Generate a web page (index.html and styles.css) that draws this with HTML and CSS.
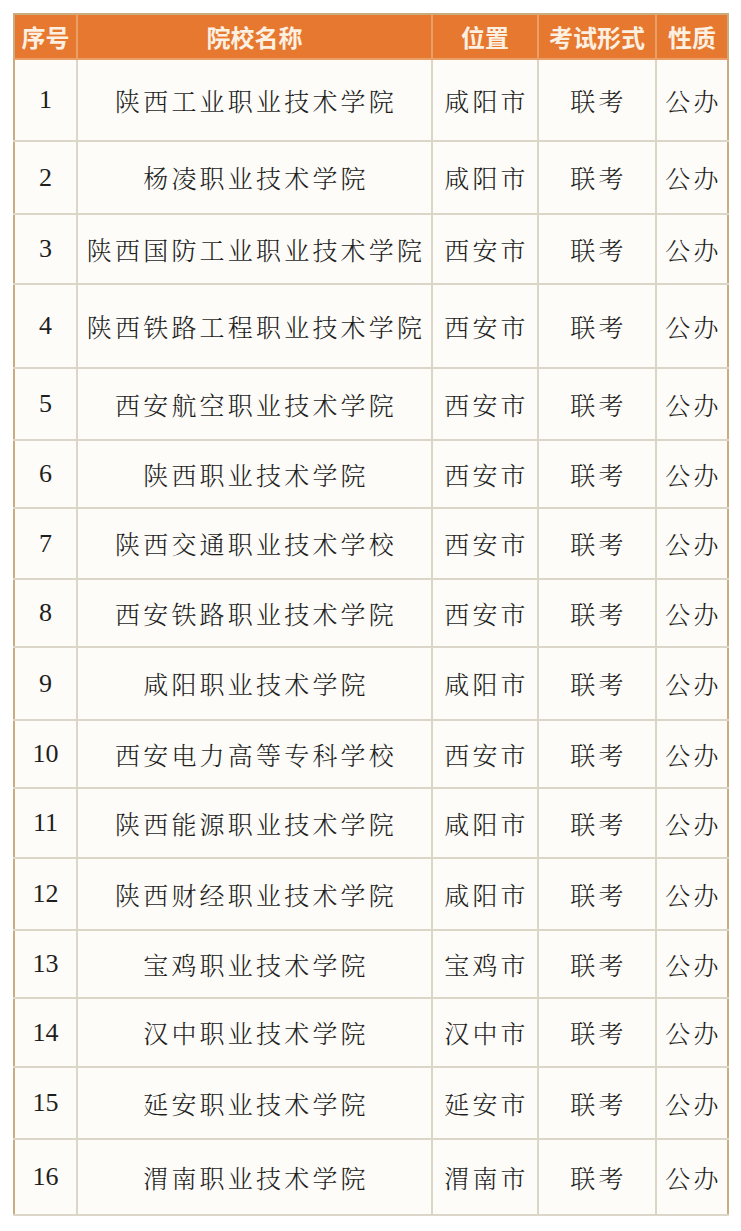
FILE: index.html
```html
<!DOCTYPE html>
<html lang="zh-CN">
<head>
<meta charset="utf-8">
<title>院校列表</title>
<link rel="stylesheet" href="styles.css">
</head>
<body>
<div class="page">
<table class="schools">
<colgroup>
<col class="c-no"><col class="c-name"><col class="c-loc"><col class="c-exam"><col class="c-type">
</colgroup>
<thead>
<tr><th>序号</th><th>院校名称</th><th>位置</th><th>考试形式</th><th>性质</th></tr>
</thead>
<tbody>
<tr><td class="num">1</td><td>陕西工业职业技术学院</td><td>咸阳市</td><td>联考</td><td>公办</td></tr>
<tr><td class="num">2</td><td>杨凌职业技术学院</td><td>咸阳市</td><td>联考</td><td>公办</td></tr>
<tr><td class="num">3</td><td>陕西国防工业职业技术学院</td><td>西安市</td><td>联考</td><td>公办</td></tr>
<tr><td class="num">4</td><td>陕西铁路工程职业技术学院</td><td>西安市</td><td>联考</td><td>公办</td></tr>
<tr><td class="num">5</td><td>西安航空职业技术学院</td><td>西安市</td><td>联考</td><td>公办</td></tr>
<tr><td class="num">6</td><td>陕西职业技术学院</td><td>西安市</td><td>联考</td><td>公办</td></tr>
<tr><td class="num">7</td><td>陕西交通职业技术学校</td><td>西安市</td><td>联考</td><td>公办</td></tr>
<tr><td class="num">8</td><td>西安铁路职业技术学院</td><td>西安市</td><td>联考</td><td>公办</td></tr>
<tr><td class="num">9</td><td>咸阳职业技术学院</td><td>咸阳市</td><td>联考</td><td>公办</td></tr>
<tr><td class="num">10</td><td>西安电力高等专科学校</td><td>西安市</td><td>联考</td><td>公办</td></tr>
<tr><td class="num">11</td><td>陕西能源职业技术学院</td><td>咸阳市</td><td>联考</td><td>公办</td></tr>
<tr><td class="num">12</td><td>陕西财经职业技术学院</td><td>咸阳市</td><td>联考</td><td>公办</td></tr>
<tr><td class="num">13</td><td>宝鸡职业技术学院</td><td>宝鸡市</td><td>联考</td><td>公办</td></tr>
<tr><td class="num">14</td><td>汉中职业技术学院</td><td>汉中市</td><td>联考</td><td>公办</td></tr>
<tr><td class="num">15</td><td>延安职业技术学院</td><td>延安市</td><td>联考</td><td>公办</td></tr>
<tr><td class="num">16</td><td>渭南职业技术学院</td><td>渭南市</td><td>联考</td><td>公办</td></tr>
</tbody>
</table>
</div>
</body>
</html>
```
FILE: styles.css
```css
html, body {
  margin: 0;
  padding: 0;
  background: #ffffff;
}
.page {
  padding: 13px 14px 0 13px;
}
.schools {
  width: 714px;
  table-layout: fixed;
  border-collapse: collapse;
  border: 2px solid #c9ad80;
  background: #fdfcf8;
}
.c-no { width: 63px; }
.c-name { width: 355px; }
.c-loc { width: 106px; }
.c-exam { width: 118px; }
.c-type { width: 72px; }

.schools th {
  height: 43px;
  padding: 0;
  background: #e6782f;
  color: #fcf0e2;
  font-family: "Noto Sans CJK SC", sans-serif;
  font-weight: 700;
  font-size: 24px;
  line-height: 1;
  text-align: center;
  border: 2px solid #e9a068;
  border-top: none;
}
.schools th:first-child { border-left: none; }
.schools th:last-child { border-right: none; }

.schools td {
  padding: 0 0 0 3px;
  text-align: center;
  vertical-align: middle;
  color: #1e1e1e;
  font-family: "Noto Serif CJK SC", "Noto Sans CJK SC", serif;
  font-weight: 300;
  font-size: 25px;
  letter-spacing: 3.2px;
  line-height: 1;
  border: 2px solid #dbd6c8;
}
.schools td.num {
  padding: 0;
  font-family: "Liberation Serif", "Times New Roman", serif;
  font-weight: 400;
  font-size: 26px;
  letter-spacing: 0;
}
.schools td:first-child { border-left-color: #c9ad80; }
.schools td:last-child { border-right-color: #c9ad80; }

.schools tbody tr:nth-child(1) { height: 82px; }
.schools tbody tr:nth-child(2) { height: 73px; }
.schools tbody tr:nth-child(3) { height: 70px; }
.schools tbody tr:nth-child(4) { height: 84px; }
.schools tbody tr:nth-child(5) { height: 72px; }
.schools tbody tr:nth-child(6) { height: 68px; }
.schools tbody tr:nth-child(7) { height: 71px; }
.schools tbody tr:nth-child(8) { height: 68px; }
.schools tbody tr:nth-child(9) { height: 73px; }
.schools tbody tr:nth-child(10) { height: 68px; }
.schools tbody tr:nth-child(11) { height: 70px; }
.schools tbody tr:nth-child(12) { height: 72px; }
.schools tbody tr:nth-child(13) { height: 68px; }
.schools tbody tr:nth-child(14) { height: 69px; }
.schools tbody tr:nth-child(15) { height: 72px; }
.schools tbody tr:nth-child(16) { height: 76px; }
```
